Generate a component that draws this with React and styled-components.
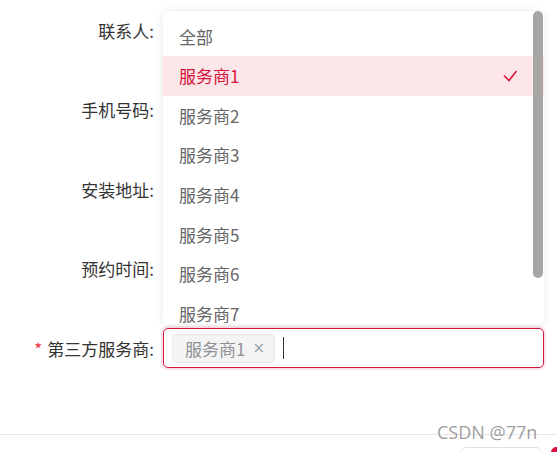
import React from 'react';
import styled, { createGlobalStyle } from 'styled-components';

const Global = createGlobalStyle`
  html, body {
    margin: 0;
    padding: 0;
    background: #fff;
    overflow: hidden;
  }
  body {
    font-family: "Noto Sans CJK SC", "Noto Sans", sans-serif;
  }
`

const Dialog = styled.div`
  position: relative;
  width: 660px;
  height: 452px;
`

const Form = styled.div`
  display: flex;
  flex-direction: column;
  gap: 39.5px;
  padding-top: 10px;
  height: 434px;
  box-sizing: border-box;
`

const Row = styled.div`
  display: flex;
  align-items: center;
  height: 40px;
`

const Label = styled.label`
  width: 163px;
  box-sizing: border-box;
  padding-right: 9px;
  text-align: right;
  font-size: 17px;
  color: #333;
  white-space: nowrap;
`

const Star = styled.span`
  color: #e8333d;
  margin-right: 5px;
`

const SelectBox = styled.div`
  width: 381px;
  height: 40px;
  box-sizing: border-box;
  border: 1px solid #d8173f;
  border-radius: 5px;
  box-shadow: 0 0 0 2px rgba(216, 23, 63, 0.13);
  display: flex;
  align-items: center;
  padding-left: 8px;
  gap: 8px;
`

const Tag = styled.span`
  display: inline-flex;
  align-items: center;
  height: 29px;
  box-sizing: border-box;
  padding: 0 9px 0 12px;
  background: #f4f4f5;
  border: 1px solid #e9e9eb;
  border-radius: 4px;
  color: #8f9196;
  font-size: 17px;
  gap: 7px;
`

const Close = styled.span`
  font-size: 15px;
  color: #a0a2a8;
  font-family: "DejaVu Sans", sans-serif;
`

const Caret = styled.span`
  width: 1px;
  height: 22px;
  background: #333;
`

const Dropdown = styled.div`
  position: absolute;
  left: 163px;
  top: 11px;
  width: 381px;
  height: 313px;
  background: #fff;
  border-radius: 5px;
  box-shadow: 0 1px 8px rgba(0, 0, 0, 0.1);
  overflow: hidden;
`

const List = styled.ul`
  list-style: none;
  margin: 0;
  padding: 5.4px 0 0;
`

const Item = styled.li`
  display: flex;
  align-items: center;
  justify-content: space-between;
  height: 39.6px;
  padding: 0 26px 0 16px;
  font-size: 17px;
  color: ${p => (p.$active ? '#d8123c' : '#666')};
  background: ${p => (p.$active ? '#fde6e7' : 'transparent')};
`

const Thumb = styled.div`
  position: absolute;
  right: 1px;
  top: 0;
  width: 10px;
  height: 267px;
  border-radius: 5px;
  background: #a8a5a5;
`

const Footer = styled.div`
  display: flex;
  justify-content: flex-end;
  gap: 10px;
  border-top: 1px solid #e6e6e6;
  padding: 12px 29px 0 0;
`

const Button = styled.div`
  width: 80px;
  height: 36px;
  box-sizing: border-box;
  border-radius: 5px;
  border: 1px solid ${p => (p.$primary ? '#d8123c' : '#dcdfe6')};
  background: ${p => (p.$primary ? '#d8123c' : '#fff')};
`

const Watermark = styled.div`
  position: absolute;
  left: 437px;
  top: 420px;
  font-family: "Open Sans", "Liberation Sans", sans-serif;
  font-size: 18px;
  color: rgba(140, 140, 140, 0.85);
`

const Check = () => (
  <svg width="16" height="14" viewBox="0 0 16 14">
    <path d="M2 6.5 L7 11.5 L14.5 2" fill="none" stroke="#d8123c" strokeWidth="1.6" />
  </svg>
)

const options = ['全部', '服务商1', '服务商2', '服务商3', '服务商4', '服务商5', '服务商6', '服务商7', '服务商8'];

export default function App() {
  return (
    <Dialog>
      <Global />
      <Form>
        <Row><Label>联系人:</Label></Row>
        <Row><Label>手机号码:</Label></Row>
        <Row><Label>安装地址:</Label></Row>
        <Row><Label>预约时间:</Label></Row>
        <Row>
          <Label><Star>*</Star>第三方服务商:</Label>
          <SelectBox>
            <Tag>服务商1<Close>×</Close></Tag>
            <Caret />
          </SelectBox>
        </Row>
      </Form>
      <Footer>
        <Button />
        <Button $primary />
      </Footer>
      <Dropdown>
        <List>
          {options.map(o => (
            <Item key={o} $active={o === '服务商1'}>
              {o}
              {o === '服务商1' && <Check />}
            </Item>
          ))}
        </List>
        <Thumb />
      </Dropdown>
      <Watermark>CSDN @77n</Watermark>
    </Dialog>
  );
}
